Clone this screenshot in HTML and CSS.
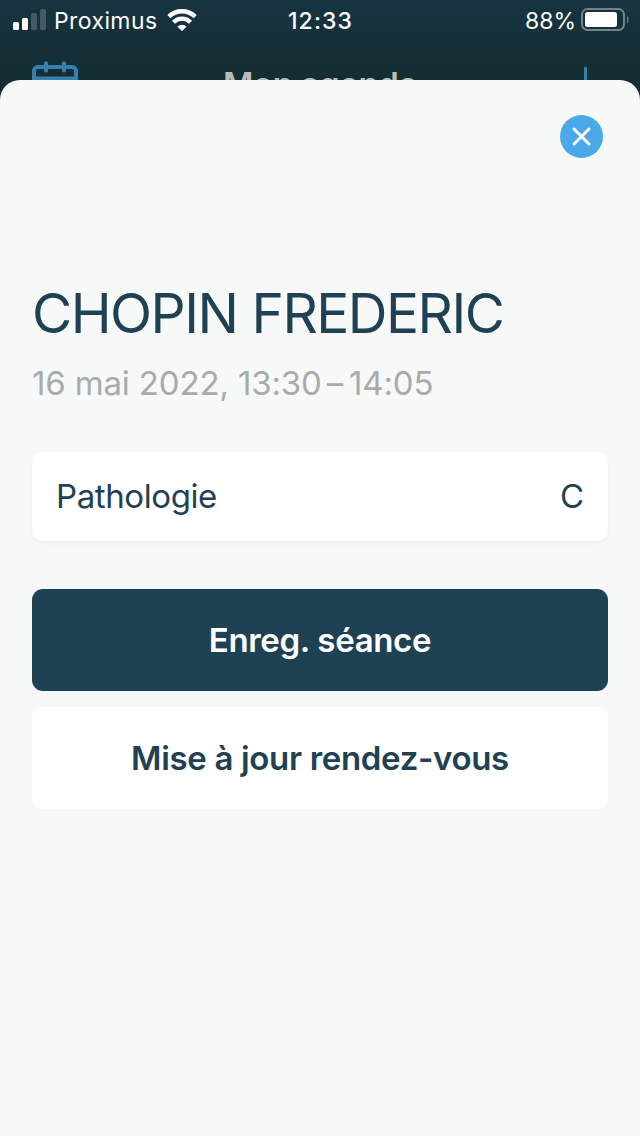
FILE: index.html
```html
<!DOCTYPE html>
<html lang="fr">
<head>
  <meta charset="UTF-8">
  <meta name="viewport" content="width=device-width, initial-scale=1.0">
  <title>Mon agenda</title>
  <link rel="stylesheet" href="styles.css">
</head>
<body>
  <!-- Status bar -->
  <div class="status-bar">
    <div class="status-left">
      <svg class="signal" width="34" height="22" viewBox="0 0 34 22" fill="#fff">
        <rect x="0" y="13" width="6" height="8" rx="1.5"/>
        <rect x="9" y="9" width="6" height="12" rx="1.5"/>
        <rect x="18" y="4" width="6" height="17" rx="1.5" opacity=".2"/>
        <rect x="27" y="0" width="6" height="21" rx="1.5" opacity=".2"/>
      </svg>
      <span class="carrier">Proximus</span>
      <svg class="wifi" width="30" height="22" viewBox="0 0 30 22" fill="none" stroke="#fff" stroke-width="4.4">
        <path d="M1.8 7.6A19 19 0 0 1 28.2 7.6"/>
        <path d="M6.5 13.2A11.8 11.8 0 0 1 23.5 13.2"/>
        <path d="M15 22L10.4 17.7A6.3 6.3 0 0 1 19.6 17.7Z" fill="#fff" stroke="none"/>
      </svg>
    </div>
    <div class="clock">12:33</div>
    <div class="status-right">
      <span class="percent">88%</span>
      <svg width="48" height="23" viewBox="0 0 48 23">
        <rect x="1" y="1" width="42" height="21" rx="5.5" fill="none" stroke="#748388" stroke-width="2"/>
        <rect x="4" y="4" width="32" height="15" rx="2.5" fill="#fff"/>
        <path d="M46 7.5Q49 11.5 46 15.5Z" fill="#748388"/>
      </svg>
    </div>
  </div>

  <!-- Page header, partly hidden behind the sheet -->
  <div class="nav-bar">
    <svg width="46" height="46" viewBox="0 0 46 46" fill="none" stroke="#3580ac" stroke-width="4" stroke-linecap="round">
      <rect x="2" y="6" width="42" height="38" rx="4"/>
      <path d="M2 17.5H44M14 2.2V9.5M32 2.2V9.5"/>
    </svg>
    <h2 class="nav-title">Mon agenda</h2>
    <svg class="add" width="40" height="40" viewBox="0 0 40 40" stroke="#3580ac" stroke-width="3" stroke-linecap="round">
      <path d="M19.5 3V38M2 20.5H38"/>
    </svg>
  </div>

  <!-- Appointment sheet -->
  <main class="sheet">
    <button class="close-btn" aria-label="Fermer">
      <svg width="43" height="43" viewBox="0 0 43 43" stroke="#fff" stroke-width="2.9" stroke-linecap="round">
        <path d="M14 14L29 29M29 14L14 29"/>
      </svg>
    </button>
    <h1>CHOPIN FREDERIC</h1>
    <p class="date">16 mai 2022, 13:30<span class="dash">–</span>14:05</p>
    <div class="card">
      <span class="label">Pathologie</span>
      <span>C</span>
    </div>
    <button class="btn btn-primary">Enreg. séance</button>
    <button class="btn btn-secondary">Mise à jour rendez-vous</button>
  </main>
</body>
</html>
```
FILE: styles.css
```css
* {
  box-sizing: border-box;
}
body {
  font-family: Inter, "Liberation Sans", sans-serif;
  display: flex;
  flex-direction: column;
  height: 1136px;
  margin: 0;
  overflow: hidden;
  background: linear-gradient(#17343f, #142d33 80px, #142d33);
  color: #1f4154;
}
.status-bar {
  display: grid;
  grid-template-columns: 1fr auto 1fr;
  height: 40px;
  padding: 0 12px 0 13px;
  color: #fff;
  font-size: 23px;
  line-height: 43px;
}
.status-left,
.status-right {
  display: flex;
}
.signal {
  margin-top: 9px;
}
.carrier {
  width: 112px;
  padding-left: 7px;
  letter-spacing: 0.4px;
}
.wifi {
  margin: 9px 0 0 8px;
}
.clock {
  font-weight: 500;
  letter-spacing: 1.1px;
}
.status-right {
  justify-content: flex-end;
}
.status-right svg {
  margin: 8px -1px 0 5px;
}
.nav-bar {
  display: flex;
  justify-content: space-between;
  height: 40px;
  flex-shrink: 0;
  padding: 21px 34px 0 32px;
}
.nav-bar svg {
  flex-shrink: 0;
}
.nav-bar .add {
  margin-top: 4px;
}
.nav-title {
  margin: 3px 4px 0 0;
  font-size: 33px;
  font-weight: 600;
  line-height: 40px;
  letter-spacing: -0.4px;
  color: #bcbdb8;
}
.sheet {
  z-index: 1;
  display: flex;
  flex-direction: column;
  flex: 1;
  padding: 35px 32px 0;
  border-radius: 20px 20px 0 0;
  background: #f7f9f9;
}
.close-btn {
  align-self: flex-end;
  width: 43px;
  height: 43px;
  margin-right: 5px;
  padding: 0;
  border: none;
  border-radius: 50%;
  background: #4ba9e8;
}
.close-btn svg {
  display: block;
}
h1 {
  margin: 121px 0 0;
  font-size: 55px;
  font-weight: 400;
  line-height: 69px;
  letter-spacing: -1.5px;
  white-space: nowrap;
}
.date {
  margin: 14px 0 0;
  font-size: 33px;
  line-height: 42px;
  letter-spacing: -0.15px;
  color: #aaa;
}
.dash {
  display: inline-block;
  margin: 0 6px 0 5px;
}
.card {
  display: flex;
  justify-content: space-between;
  height: 89px;
  margin-top: 48px;
  padding: 0 24px;
  border-radius: 11px;
  background: #fff;
  box-shadow: 0 2px 4px rgba(0, 0, 0, 0.03);
  font-size: 33px;
  line-height: 89px;
}
.label {
  letter-spacing: -0.4px;
}
.btn {
  height: 102px;
  padding: 0;
  border: none;
  border-radius: 11px;
  font-family: inherit;
  font-size: 33px;
  font-weight: 600;
  letter-spacing: -0.33px;
}
.btn-primary {
  margin-top: 48px;
  background: #1f4154;
  color: #fff;
}
.btn-secondary {
  margin-top: 16px;
  background: #fff;
  color: #1f4154;
}
```
